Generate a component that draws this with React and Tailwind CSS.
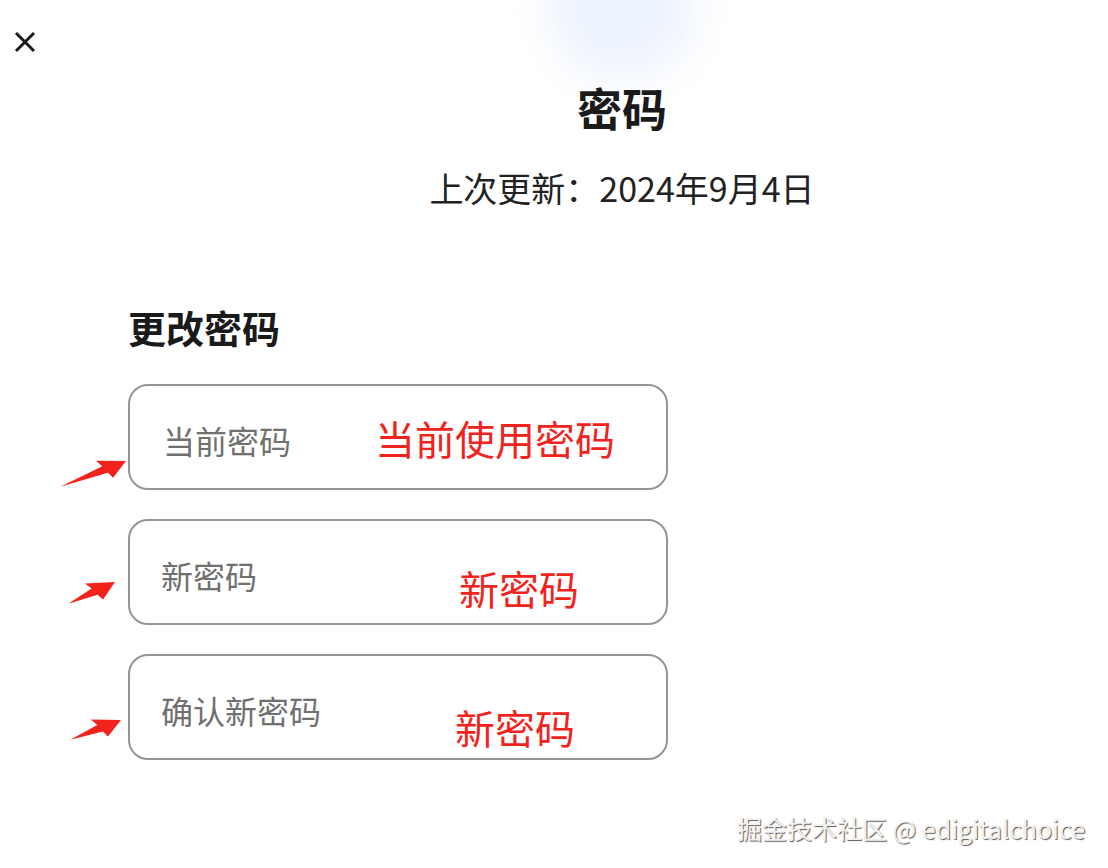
import React from "react";

const font = { fontFamily: '"Noto Sans CJK SC", "Noto Sans", sans-serif' };

function Arrow({ x1, y1, x2, y2 }) {
  const dx = x2 - x1;
  const dy = y2 - y1;
  const L = Math.sqrt(dx * dx + dy * dy);
  const angle = (Math.atan2(dy, dx) * 180) / Math.PI;
  const pts = [
    [0, 0.8],
    [L - 24, -3.5],
    [L - 28, -11],
    [L, 0],
    [L - 18, 11],
    [L - 21, 4.5],
  ]
    .map((p) => p.join(","))
    .join(" ");
  return (
    <svg
      className="absolute left-[-80px] top-[50px]"
      width="80"
      height="70"
      viewBox="0 0 80 70"
    >
      <polygon
        points={pts}
        fill="#f2231c"
        transform={`translate(${x1} ${y1}) rotate(${angle})`}
      />
    </svg>
  );
}

const fields = [
  {
    label: "当前密码",
    note: "当前使用密码",
    labelCls: "ml-[33px]",
    noteCls: "ml-[84px] mt-[2px]",
    arrow: { x1: 10, y1: 50, x2: 76, y2: 25 },
  },
  {
    label: "新密码",
    note: "新密码",
    labelCls: "ml-[31px]",
    noteCls: "ml-[202px] mt-[32px]",
    arrow: { x1: 18, y1: 32, x2: 65, y2: 11 },
  },
  {
    label: "确认新密码",
    note: "新密码",
    labelCls: "ml-[31px]",
    noteCls: "ml-[134px] mt-[40px]",
    arrow: { x1: 20, y1: 33, x2: 71, y2: 14 },
  },
];

export default function App() {
  return (
    <div
      className="relative w-[1108px] h-[868px] bg-white overflow-hidden text-[#1f1f1f]"
      style={font}
    >
      <div className="absolute left-[547px] top-[-70px] w-[150px] h-[150px] rounded-full bg-[#edf3fd] blur-[20px]" />

      <div className="relative pt-[31px] pl-[14px]">
        <svg width="22" height="22" viewBox="0 0 22 22">
          <path
            d="M2 2 L20 20 M20 2 L2 20"
            stroke="#1a1a1a"
            strokeWidth="3"
          />
        </svg>
      </div>

      <div className="relative pl-[136px] text-center">
        <h1 className="mt-[33px] text-[45px] leading-[44px] font-bold text-[#1a1a1a]">
          密码
        </h1>
        <p className="mt-[41px] text-[34px] leading-[34px] text-[#222]">
          上次更新：2024年9月4日
        </p>
      </div>

      <div className="relative pl-[128px]">
        <h2 className="mt-[103px] text-[38px] leading-[38px] font-bold text-[#1a1a1a]">
          更改密码
        </h2>
        <div className="mt-[38px] flex flex-col gap-[29px]">
          {fields.map((f) => (
            <div
              key={f.label}
              className="relative w-[540px] h-[106px] rounded-[20px] border-2 border-[#959595] flex items-center"
            >
              <span
                className={`${f.labelCls} mt-[6px] text-[32px] leading-[32px] text-[#707070]`}
              >
                {f.label}
              </span>
              <span
                className={`${f.noteCls} text-[40px] leading-[40px] text-[#f2231c]`}
              >
                {f.note}
              </span>
              <Arrow {...f.arrow} />
            </div>
          ))}
        </div>
      </div>

      <div className="absolute right-[23px] bottom-[26px] text-[25px] leading-[28px] text-[#f2f2f2] [text-shadow:1px_1px_1px_rgba(0,0,0,0.65)]">
        掘金技术社区 @ edigitalchoice
      </div>
    </div>
  );
}
